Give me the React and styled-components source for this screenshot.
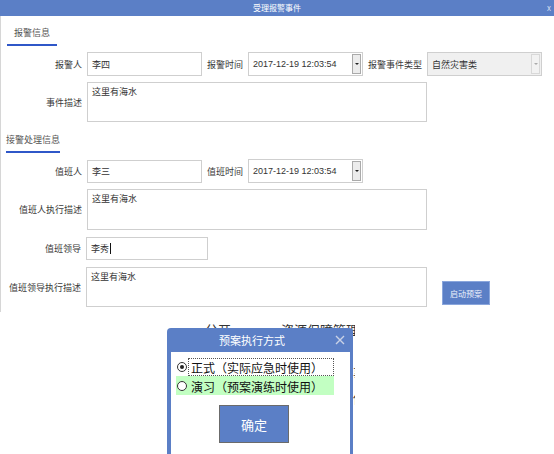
import React from "react";
import styled, { createGlobalStyle } from "styled-components";

const BLUE = "#5b7fc6";

const GlobalStyle = createGlobalStyle`
  html, body {
    margin: 0;
    padding: 0;
    background: #fff;
  }
  body {
    font-family: "Noto Sans CJK SC", "Liberation Sans", sans-serif;
    color: #333;
  }
`;

const Screen = styled.div`
  width: 554px;
  height: 454px;
  overflow: hidden;
  background: #fff;
`;

const Window = styled.div`
  display: flex;
  flex-direction: column;
`;

const TitleBar = styled.div`
  height: 16px;
  background: ${BLUE};
  display: grid;
  grid-template-columns: 1fr auto 1fr;
  align-items: center;
  color: #fff;
  font-size: 8px;
  line-height: 16px;
  .close {
    justify-self: end;
    margin-right: 3px;
    color: #d6def0;
  }
`;

const Body = styled.div`
  height: 296px;
  box-sizing: border-box;
  border-left: 1px solid #d6d6d6;
  display: flex;
  flex-direction: column;
`;

const SectionTab = styled.div`
  align-self: flex-start;
  margin-top: ${(p) => p.$top}px;
  margin-left: ${(p) => p.$left}px;
  padding: 0 ${(p) => p.$pad}px 4px ${(p) => p.$pad}px;
  font-size: 9px;
  line-height: 14px;
  color: #555;
  border-bottom: 2px solid #2f57c8;
`;

const Row = styled.div`
  display: flex;
  align-items: ${(p) => (p.$stretch ? "stretch" : "center")};
  margin-top: ${(p) => p.$top}px;
`;

const Label = styled.div`
  width: ${(p) => p.$w || 81}px;
  padding-right: 5px;
  box-sizing: content-box;
  text-align: right;
  font-size: 9px;
  color: #3a3a3a;
  white-space: nowrap;
  align-self: center;
`;

const InlineLabel = styled.div`
  margin: 0 5px;
  font-size: 9px;
  color: #3a3a3a;
  white-space: nowrap;
`;

const Field = styled.div`
  width: ${(p) => p.$w}px;
  height: ${(p) => p.$h}px;
  box-sizing: border-box;
  border: 1px solid #cfcfcf;
  background: ${(p) => (p.$disabled ? "#f0f0f0" : "#fff")};
  display: flex;
  align-items: ${(p) => (p.$multi ? "flex-start" : "center")};
  padding-left: 4px;
  padding-top: ${(p) => (p.$multi ? 2 : 0)}px;
  font-size: 9px;
  font-family: "Liberation Sans", "Noto Sans CJK SC", sans-serif;
  color: #333;
  .value {
    flex: 1;
    white-space: nowrap;
  }
`;

const Caret = styled.span`
  display: inline-block;
  width: 1px;
  height: 11px;
  background: #111;
  vertical-align: middle;
  margin-left: 1px;
`;

const DropButton = styled.div`
  width: 9px;
  align-self: stretch;
  margin: 1px;
  box-sizing: border-box;
  border: 1px solid ${(p) => (p.$faint ? "#d8d8d8" : "#aaa")};
  background: ${(p) => (p.$faint ? "#f2f2f2" : "#ececec")};
  display: flex;
  align-items: center;
  justify-content: center;
  &::after {
    content: "";
    border-left: 2px solid transparent;
    border-right: 2px solid transparent;
    border-top: 2px solid ${(p) => (p.$faint ? "#aaa" : "#222")};
  }
`;

const ActionButton = styled.button`
  align-self: flex-end;
  margin: 0 0 2px 15px;
  width: 48px;
  height: 24px;
  border: 1px solid #8aa6dc;
  background: ${BLUE};
  color: #eef2fb;
  font-family: "Noto Sans CJK SC", sans-serif;
  font-size: 8px;
  padding: 0;
`;

const Stage = styled.div`
  padding: 10px 0 0 166px;
`;

const Backdrop = styled.div`
  position: relative;
  width: 189px;
  height: 132px;
  overflow: hidden;
  background: #fff;
`;

const BackLine = styled.div`
  white-space: nowrap;
  font-size: 13px;
  line-height: 15px;
  color: #333;
  padding-left: ${(p) => p.$left}px;
  margin-top: ${(p) => p.$top}px;
  .gap {
    display: inline-block;
    width: ${(p) => p.$gap || 0}px;
  }
`;

const Dialog = styled.div`
  position: absolute;
  left: 1px;
  top: 6px;
  width: 186px;
  bottom: -10px;
  background: ${BLUE};
  border-radius: 4px 4px 0 0;
  display: flex;
  flex-direction: column;
  padding: 0 3px 0 4px;
  box-sizing: border-box;
`;

const DialogTitle = styled.div`
  height: 24px;
  display: flex;
  align-items: center;
  color: #fff;
  font-size: 11px;
  padding-left: 48px;
  svg {
    margin-left: auto;
    margin-right: 5px;
  }
`;

const DialogBody = styled.div`
  flex: 1;
  background: #fff;
  padding: 5px 0 0 5px;
  display: flex;
  flex-direction: column;
`;

const Option = styled.div`
  width: 158px;
  height: 19px;
  display: flex;
  align-items: center;
  background: ${(p) => (p.$hl ? "#c2ffc2" : "transparent")};
  font-size: 12px;
  color: #111;
`;

const Radio = styled.span`
  width: 10px;
  height: 10px;
  margin: 0 1px 0 1px;
  box-sizing: border-box;
  border: 1px solid #333;
  border-radius: 50%;
  background: #fff;
  display: flex;
  align-items: center;
  justify-content: center;
  flex: none;
  &::after {
    content: "";
    width: 4px;
    height: 4px;
    border-radius: 50%;
    background: ${(p) => (p.$on ? "#222" : "transparent")};
  }
`;

const OptionText = styled.span`
  height: 18px;
  line-height: 18px;
  padding: 0 10px 0 2px;
  box-sizing: border-box;
  border: 1px dotted ${(p) => (p.$focus ? "#555" : "transparent")};
  white-space: nowrap;
`;

const ConfirmButton = styled.button`
  margin: 10px 0 0 43px;
  width: 70px;
  height: 38px;
  border: 1px solid #6b6b6b;
  background: ${BLUE};
  color: #fff;
  font-family: "Noto Sans CJK SC", sans-serif;
  font-size: 13px;
  padding: 0;
`;

function DateField({ value }) {
  return (
    <Field $w={115} $h={24}>
      <span className="value">{value}</span>
      <DropButton />
    </Field>
  );
}

export default function App() {
  return (
    <Screen>
      <GlobalStyle />
      <Window>
        <TitleBar>
          <span />
          <span>受理报警事件</span>
          <span className="close">x</span>
        </TitleBar>
        <Body>
          <SectionTab $top={10} $left={6} $pad={7}>
            报警信息
          </SectionTab>
          <Row $top={6}>
            <Label>报警人</Label>
            <Field $w={115} $h={24}>李四</Field>
            <InlineLabel>报警时间</InlineLabel>
            <DateField value="2017-12-19 12:03:54" />
            <InlineLabel>报警事件类型</InlineLabel>
            <Field $w={115} $h={24} $disabled>
              <span className="value">自然灾害类</span>
              <DropButton $faint />
            </Field>
          </Row>
          <Row $top={6}>
            <Label>事件描述</Label>
            <Field $w={340} $h={40} $multi>这里有海水</Field>
          </Row>

          <SectionTab $top={11} $left={5} $pad={0}>
            接警处理信息
          </SectionTab>
          <Row $top={6}>
            <Label>值班人</Label>
            <Field $w={115} $h={23}>李三</Field>
            <InlineLabel>值班时间</InlineLabel>
            <DateField value="2017-12-19 12:03:54" />
          </Row>
          <Row $top={6}>
            <Label>值班人执行描述</Label>
            <Field $w={340} $h={41} $multi>这里有海水</Field>
          </Row>
          <Row $top={7}>
            <Label $w={80}>值班领导</Label>
            <Field $w={122} $h={23}>
              李秀<Caret />
            </Field>
          </Row>
          <Row $top={7} $stretch>
            <Label $w={80}>值班领导执行描述</Label>
            <Field $w={341} $h={40} $multi>这里有海水</Field>
            <ActionButton>启动预案</ActionButton>
          </Row>
        </Body>
      </Window>

      <Stage>
        <Backdrop>
          <BackLine $left={39} $top={0} $gap={50}>
            分开<span className="gap" />资源保障管理
          </BackLine>
          <BackLine $left={187} $top={28}>事件</BackLine>
          <BackLine $left={187} $top={10}>保障</BackLine>
          <Dialog>
            <DialogTitle>
              预案执行方式
              <svg width="10" height="10" viewBox="0 0 10 10">
                <path d="M1 1L9 9M9 1L1 9" stroke="#c9d2e6" strokeWidth="1.4" />
              </svg>
            </DialogTitle>
            <DialogBody>
              <Option>
                <Radio $on />
                <OptionText $focus>正式（实际应急时使用）</OptionText>
              </Option>
              <Option $hl>
                <Radio />
                <OptionText>演习（预案演练时使用）</OptionText>
              </Option>
              <ConfirmButton>确定</ConfirmButton>
            </DialogBody>
          </Dialog>
        </Backdrop>
      </Stage>
    </Screen>
  );
}
